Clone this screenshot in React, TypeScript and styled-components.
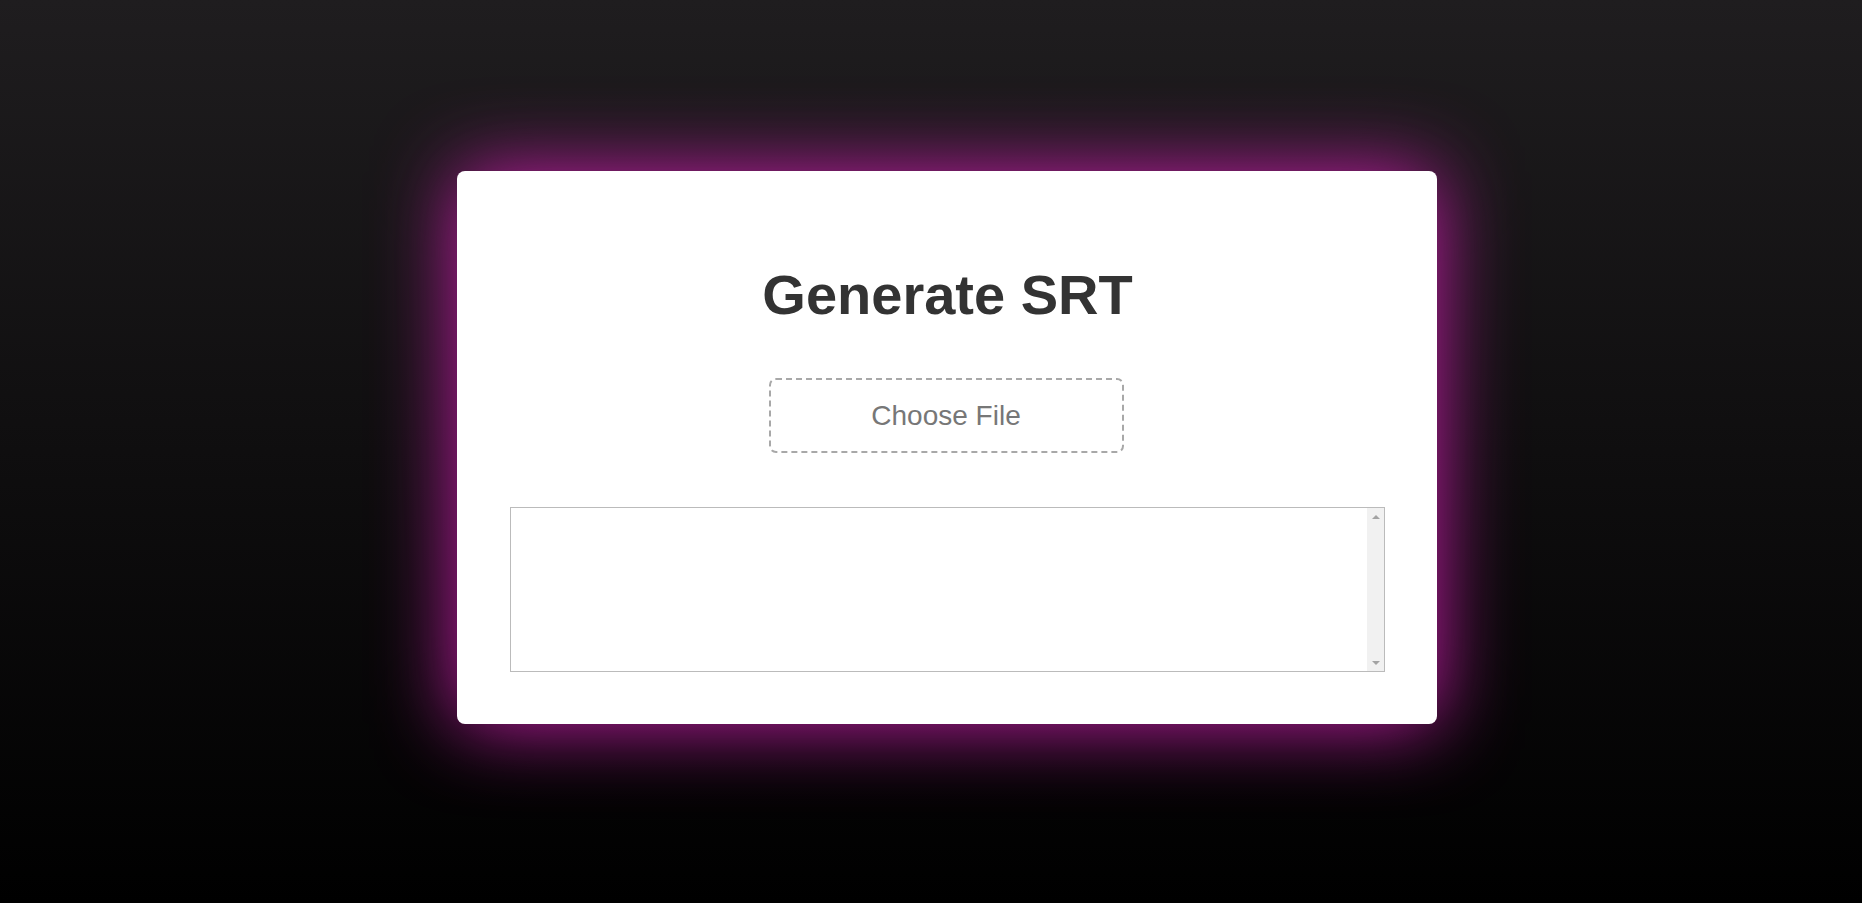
import React from "react";
import styled, { createGlobalStyle } from "styled-components";

const GlobalStyle = createGlobalStyle`
  html, body {
    margin: 0;
    padding: 0;
    height: 100%;
  }
  body {
    background: linear-gradient(to bottom, #1f1d1f 0%, #0f0e0f 50%, #000000 100%);
    font-family: "Liberation Sans", Arial, sans-serif;
  }
  #root {
    min-height: 100vh;
  }
`;

const Page = styled.main`
  min-height: 100vh;
  display: flex;
  justify-content: center;
  align-items: flex-start;
  padding: 171px 0 0 32px;
  box-sizing: border-box;
`;

const Card = styled.section`
  width: 980px;
  box-sizing: border-box;
  background: #ffffff;
  border-radius: 8px;
  padding: 92px 52px 52px 53px;
  display: flex;
  flex-direction: column;
  align-items: center;
  box-shadow: 0 0 80px rgb(200, 30, 170);
`;

const Title = styled.h1`
  margin: 0;
  font-family: "Liberation Sans", Arial, sans-serif;
  font-weight: 700;
  font-size: 56px;
  line-height: 63px;
  color: #333333;
`;

const FileLabel = styled.label`
  margin-top: 52px;
  display: inline-flex;
  align-items: center;
  justify-content: center;
  width: 355px;
  height: 75px;
  box-sizing: border-box;
  border: 2px dashed #a8a8a8;
  border-radius: 7px;
  font-family: "Liberation Sans", Arial, sans-serif;
  font-size: 28px;
  color: #777777;
  cursor: pointer;
  margin-left: -3px;
`;

const HiddenInput = styled.input`
  display: none;
`;

const OutputFrame = styled.div`
  margin-top: 54px;
  width: 875px;
  height: 165px;
  box-sizing: border-box;
  border: 1px solid #bbbbbb;
  display: flex;
  background: #ffffff;
`;

const Output = styled.textarea`
  flex: 1;
  min-width: 0;
  border: none;
  resize: none;
  overflow: hidden;
  font-family: "Liberation Mono", monospace;
  font-size: 14px;
  padding: 8px;
  outline: none;
  background: transparent;
`;

const ScrollTrack = styled.div`
  width: 17px;
  flex: 0 0 17px;
  background: #f1f1f1;
  display: flex;
  flex-direction: column;
  justify-content: space-between;
  align-items: center;
  padding: 7px 0 6px;
  box-sizing: border-box;
`;

const Arrow = styled.svg`
  display: block;
  width: 8px;
  height: 4px;
`;

export default function App() {
  return (
    <>
      <GlobalStyle />
      <Page>
        <Card>
          <Title>Generate SRT</Title>
          <FileLabel>
            Choose File
            <HiddenInput type="file" />
          </FileLabel>
          <OutputFrame>
            <Output readOnly />
            <ScrollTrack>
              <Arrow viewBox="0 0 8 4">
                <polygon points="0,4 4,0 8,4" fill="#a3a3a3" />
              </Arrow>
              <Arrow viewBox="0 0 8 4">
                <polygon points="0,0 8,0 4,4" fill="#a3a3a3" />
              </Arrow>
            </ScrollTrack>
          </OutputFrame>
        </Card>
      </Page>
    </>
  );
}
